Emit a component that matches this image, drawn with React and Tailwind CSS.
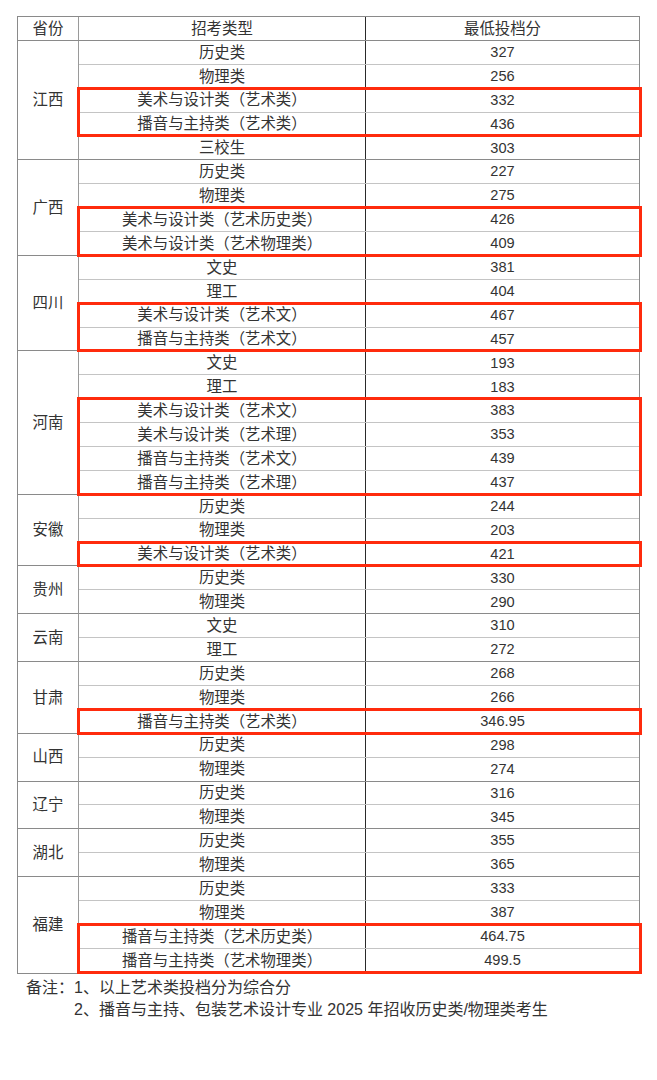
const data = [
  {
    name: '江西',
    rows: [
      ['历史类', '327'],
      ['物理类', '256'],
      ['美术与设计类（艺术类）', '332', true],
      ['播音与主持类（艺术类）', '436', true],
      ['三校生', '303'],
    ],
  },
  {
    name: '广西',
    rows: [
      ['历史类', '227'],
      ['物理类', '275'],
      ['美术与设计类（艺术历史类）', '426', true],
      ['美术与设计类（艺术物理类）', '409', true],
    ],
  },
  {
    name: '四川',
    rows: [
      ['文史', '381'],
      ['理工', '404'],
      ['美术与设计类（艺术文）', '467', true],
      ['播音与主持类（艺术文）', '457', true],
    ],
  },
  {
    name: '河南',
    rows: [
      ['文史', '193'],
      ['理工', '183'],
      ['美术与设计类（艺术文）', '383', true],
      ['美术与设计类（艺术理）', '353', true],
      ['播音与主持类（艺术文）', '439', true],
      ['播音与主持类（艺术理）', '437', true],
    ],
  },
  {
    name: '安徽',
    rows: [
      ['历史类', '244'],
      ['物理类', '203'],
      ['美术与设计类（艺术类）', '421', true],
    ],
  },
  { name: '贵州', rows: [['历史类', '330'], ['物理类', '290']] },
  { name: '云南', rows: [['文史', '310'], ['理工', '272']] },
  {
    name: '甘肃',
    rows: [
      ['历史类', '268'],
      ['物理类', '266'],
      ['播音与主持类（艺术类）', '346.95', true],
    ],
  },
  { name: '山西', rows: [['历史类', '298'], ['物理类', '274']] },
  { name: '辽宁', rows: [['历史类', '316'], ['物理类', '345']] },
  { name: '湖北', rows: [['历史类', '355'], ['物理类', '365']] },
  {
    name: '福建',
    rows: [
      ['历史类', '333'],
      ['物理类', '387'],
      ['播音与主持类（艺术历史类）', '464.75', true],
      ['播音与主持类（艺术物理类）', '499.5', true],
    ],
  },
];

// border under each row: light inside a province, darker at the province edge, none at the very bottom
function Row({ type, score, edge }) {
  const line = edge === 'end' ? '' : edge === 'province' ? 'border-b border-[#8a8a8a]' : 'border-b border-[#c4c4c4]';
  return (
    <div className={`flex h-[23.9px] ${line}`}>
      <div className="w-[287px] shrink-0 flex items-center justify-center border-r border-[#2a2a2a] text-[15.4px]">{type}</div>
      <div className="flex-1 flex items-center justify-center">{score}</div>
    </div>
  );
}

// consecutive rows grouped so highlighted ones share one red frame
function groupRows(rows) {
  const groups = [];
  rows.forEach((r) => {
    const prev = groups[groups.length - 1];
    if (prev && prev.hl === !!r[2]) prev.rows.push(r);
    else groups.push({ hl: !!r[2], rows: [r] });
  });
  return groups;
}

function Province({ name, rows, last }) {
  const groups = groupRows(rows);
  return (
    <div className="flex">
      <div className={`w-[61px] shrink-0 flex items-center justify-center border-r border-[#9a9a9a] text-[15.4px] ${last ? '' : 'border-b border-b-[#8a8a8a]'}`}>
        {name}
      </div>
      <div className="flex-1 flex flex-col">
        {groups.map((g, gi) => {
          const lastGroup = gi === groups.length - 1;
          const body = g.rows.map((r, ri) => {
            const isLast = lastGroup && ri === g.rows.length - 1;
            return (
              <Row key={ri} type={r[0]} score={r[1]} edge={isLast ? (last ? 'end' : 'province') : 'row'} />
            );
          });
          if (!g.hl) return <div key={gi}>{body}</div>;
          return (
            <div key={gi} className="relative">
              {body}
              <div className="absolute -top-[2px] -bottom-[1px] -left-[2px] -right-[3px] border-[3px] border-[#ff2b0d] pointer-events-none" />
            </div>
          );
        })}
      </div>
    </div>
  );
}

export default function App() {
  return (
    <div
      className="w-[657px] h-[1080px] bg-white text-[#333] pt-[16px] [text-spacing-trim:space-all]"
      style={{ fontFamily: '"Liberation Sans", "Noto Sans CJK SC", sans-serif' }}
    >
      <div className="ml-[17px] w-[623px] border border-[#8a8a8a] text-[14.6px] leading-none">
        <div className="flex h-[23.9px] border-b border-[#8a8a8a] text-[15.4px]">
          <div className="w-[61px] shrink-0 flex items-center justify-center border-r border-[#9a9a9a]">省份</div>
          <div className="w-[287px] shrink-0 flex items-center justify-center border-r border-[#2a2a2a]">招考类型</div>
          <div className="flex-1 flex items-center justify-center">最低投档分</div>
        </div>
        {data.map((p, i) => (
          <Province key={p.name} name={p.name} rows={p.rows} last={i === data.length - 1} />
        ))}
      </div>

      <div className="flex pl-[26px] mt-[3px] text-[16px] leading-[22px]">
        <span className="w-[48px] shrink-0">备注：</span>
        <div className="flex flex-col">
          <span>1、以上艺术类投档分为综合分</span>
          <span>2、播音与主持、包装艺术设计专业 2025 年招收历史类/物理类考生</span>
        </div>
      </div>
    </div>
  );
}
